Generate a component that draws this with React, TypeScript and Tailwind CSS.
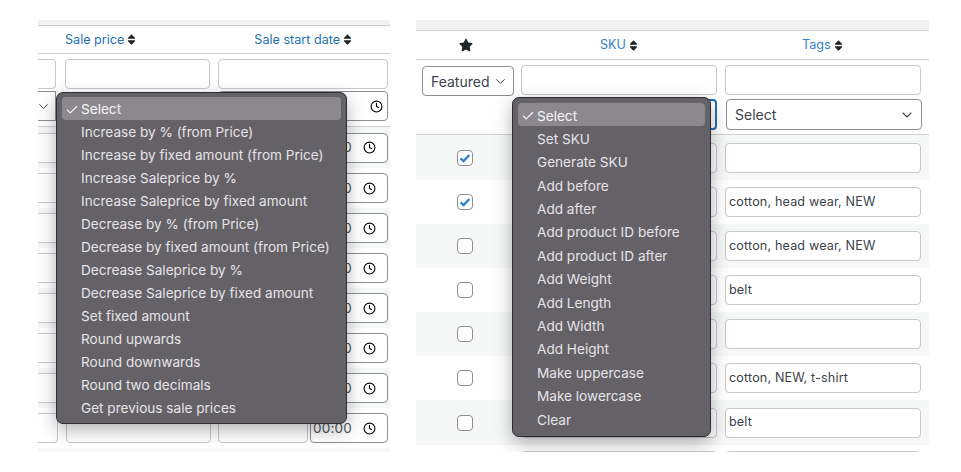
import { Clock, ChevronDown, Check } from "lucide-react";
import { FaSort, FaStar } from "react-icons/fa";

const box = "block h-[30px] rounded-[4px] border border-[#c6c8cb] bg-white";

function Menu({ items, className, item }: { items: string[]; className: string; item: string }) {
  return (
    <div className={className}>
      {items.map((t, i) => (
        <div key={t} className={`${item} relative flex items-center pl-[19px] pt-[2px] rounded-[4px] text-[13.6px] ${i === 0 ? "bg-[#8b898e] text-[#f6f5f6]" : "text-[#e6e4e7]"}`}>
          {i === 0 && <Check size={14} strokeWidth={2} className="absolute left-[3px] text-[#f6f5f6]" />}
          {t}
        </div>
      ))}
    </div>
  );
}

function Head({ label, className }: { label: string; className: string }) {
  return (
    <div className={`flex items-center gap-[1px] pt-[1px] text-[12.6px] ${className}`}>
      <span>{label}</span>
      <FaSort size={13} className="text-[#1d2327]" />
    </div>
  );
}

function LeftRow({ gray, tall }: { gray: boolean; tall?: boolean }) {
  return (
    <div className={`flex items-center ${tall ? "h-[41px]" : "h-[40px]"} ${gray ? "bg-[#f6f7f7]" : ""}`}>
      <div className={`${box} w-[20px] border-l-0 rounded-l-none`} />
      <div className={`${box} w-[145px] ml-[8px]`} />
      <div className={`${box} w-[90px] ml-[7px]`} />
      <div className="h-[30px] w-[78px] ml-[2px] rounded-[4px] border border-[#8c8f94] bg-white flex items-center pl-[2px] pr-[11px] justify-between text-[13.5px] text-[#50575e] tracking-[0.2px]">
        <span>00:00</span>
        <Clock size={13} strokeWidth={2} className="text-black" />
      </div>
    </div>
  );
}

function LeftPanel() {
  const items = [
    "Select",
    "Increase by % (from Price)",
    "Increase by fixed amount (from Price)",
    "Increase Saleprice by %",
    "Increase Saleprice by fixed amount",
    "Decrease by % (from Price)",
    "Decrease by fixed amount (from Price)",
    "Decrease Saleprice by %",
    "Decrease Saleprice by fixed amount",
    "Set fixed amount",
    "Round upwards",
    "Round downwards",
    "Round two decimals",
    "Get previous sale prices",
  ];
  return (
    <section className="relative w-[352px] h-[432px] overflow-visible">
      <div className="h-[6px] bg-[#f2f2f2] border-b border-[#cfd0d1]" />
      <div className="flex h-[28px] items-center border-b border-[#cfd0d1] text-[#2271b1]">
        <Head label="Sale price" className="ml-[27px]" />
        <Head label="Sale start date" className="ml-[116px]" />
      </div>
      <div className="h-[73px] border-b border-[#cfd0d1] pt-[5px]">
        <div className="flex">
          <div className={`${box} w-[18px] border-l-0 rounded-l-none`} />
          <div className={`${box} w-[145px] ml-[9px]`} />
          <div className={`${box} w-[170px] ml-[8px]`} />
        </div>
        <div className="flex mt-[2px]">
          <div className="h-[30px] w-[18px] border border-l-0 border-[#8c8f94] bg-white flex items-center justify-start">
            <ChevronDown size={15} strokeWidth={1.6} className="text-[#3c434a] -ml-[2px]" />
          </div>
          <div className="h-[30px] w-[170px] ml-[162px] rounded-[4px] border border-[#8c8f94] bg-white flex items-center justify-end pr-[4px]">
            <Clock size={13} strokeWidth={2} className="text-black" />
          </div>
        </div>
      </div>
      <LeftRow gray tall />
      <LeftRow gray={false} />
      <LeftRow gray />
      <LeftRow gray={false} />
      <LeftRow gray />
      <LeftRow gray={false} />
      <LeftRow gray />
      <LeftRow gray={false} />
      <div className="h-[4px] bg-[#f6f7f7]" />
      <Menu
        items={items}
        item="h-[23px]"
        className="absolute left-[18px] top-[72px] w-[291px] h-[332px] px-[5px] pt-[4px] rounded-[7px] bg-[#646167] border border-[#2f2d31] shadow-[0_6px_18px_rgba(0,0,0,0.3)]"
      />
    </section>
  );
}

function RightRow({ on, gray, tags, h }: { on: boolean; gray: boolean; tags: string; h: string }) {
  return (
    <div className={`flex items-center ${h} ${gray ? "bg-[#f6f7f7]" : ""}`}>
      <div className="w-[106px] flex justify-center pl-[3px] pr-[11px]">
        <div className="w-[16px] h-[16px] rounded-[4px] border border-[#8c8f94] bg-white flex items-center justify-center">
          {on && (
            <svg viewBox="0 0 16 16" className="w-[14px] h-[14px]">
              <path d="M3 8.4 6.4 11.6 13 4.6" fill="none" stroke="#2f7fcb" strokeWidth="2.6" />
            </svg>
          )}
        </div>
      </div>
      <div className={`${box} w-[196px] ml-[-1px]`} />
      <div className="h-[30px] w-[196px] ml-[8px] rounded-[4px] border border-[#c6c8cb] bg-white flex items-center pl-[3px] text-[12.6px] text-[#3c434a] tracking-[0.15px]">
        {tags}
      </div>
    </div>
  );
}

function RightPanel() {
  const items = [
    "Select",
    "Set SKU",
    "Generate SKU",
    "Add before",
    "Add after",
    "Add product ID before",
    "Add product ID after",
    "Add Weight",
    "Add Length",
    "Add Width",
    "Add Height",
    "Make uppercase",
    "Make lowercase",
    "Clear",
  ];
  return (
    <section className="relative w-[513px] h-[432px] ml-[26px] overflow-hidden">
      <div className="h-[11px] bg-[#f2f2f2] border-b border-[#cfd0d1]" />
      <div className="flex h-[29px] items-center border-b border-[#cfd0d1] text-[#3582c4]">
        <div className="w-[100px] flex justify-center">
          <FaStar size={14} className="text-[#1d2327]" />
        </div>
        <Head label="SKU" className="ml-[84px]" />
        <Head label="Tags" className="ml-[162px]" />
      </div>
      <div className="h-[75px] border-b border-[#cfd0d1] pl-[6px] pt-[5px]">
        <div className="flex">
          <div className="mt-[1px] h-[30px] w-[92px] rounded-[4px] border border-[#8c8f94] bg-white flex items-center pl-[8px] gap-[3px] text-[14px] text-[#3c434a]">
            Featured
            <ChevronDown size={15} strokeWidth={1.6} className="text-[#3c434a]" />
          </div>
          <div className={`${box} w-[196px] ml-[7px] h-[29px]`} />
          <div className={`${box} w-[196px] ml-[8px] h-[29px]`} />
        </div>
        <div className="flex mt-[3px]">
          <div className="h-[31px] w-[196px] ml-[99px] rounded-[4px] border-2 border-[#2271b1] bg-white" />
          <div className="h-[31px] w-[196px] ml-[9px] rounded-[4px] border border-[#8c8f94] bg-white flex items-center justify-between pl-[8px] pr-[6px] text-[14px] text-[#3c434a]">
            Select
            <ChevronDown size={16} strokeWidth={1.6} className="text-[#3c434a]" />
          </div>
        </div>
      </div>
      <RightRow on gray tags="" h="h-[45px]" />
      <RightRow on gray={false} tags="cotton, head wear, NEW" h="h-[44px]" />
      <RightRow on={false} gray tags="cotton, head wear, NEW" h="h-[44px]" />
      <RightRow on={false} gray={false} tags="belt" h="h-[44px]" />
      <RightRow on={false} gray tags="" h="h-[44px]" />
      <RightRow on={false} gray={false} tags="cotton, NEW, t-shirt" h="h-[44px]" />
      <RightRow on={false} gray tags="belt" h="h-[45px]" />
      <div className="flex pt-[6px] pl-[105px]">
        <div className="w-[196px] h-[30px] rounded-[4px] border border-[#c6c8cb]" />
        <div className="w-[196px] h-[30px] ml-[8px] rounded-[4px] border border-[#c6c8cb]" />
      </div>
      <Menu
        items={items}
        item="h-[23.4px]"
        className="absolute left-[96px] top-[77px] w-[199px] h-[340px] p-[5px] rounded-[7px] bg-[#646167] border border-[#2f2d31] shadow-[0_6px_18px_rgba(0,0,0,0.3)]"
      />
    </section>
  );
}

export default function App() {
  return (
    <main className="w-[961px] h-[472px] overflow-hidden bg-white pt-[20px] pl-[38px] flex items-start font-['Inter','Liberation_Sans',sans-serif]">
      <LeftPanel />
      <RightPanel />
    </main>
  );
}
